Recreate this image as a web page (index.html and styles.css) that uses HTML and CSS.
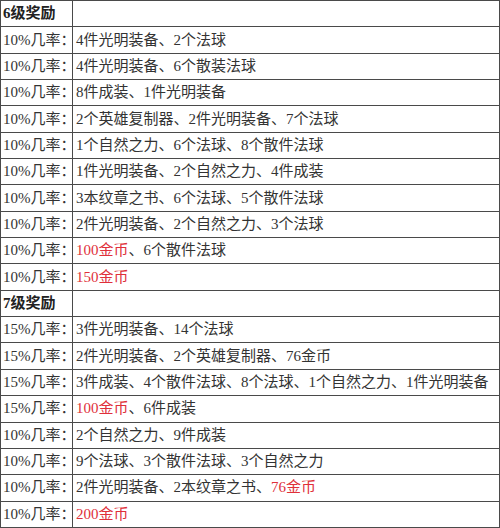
FILE: index.html
```html
<!DOCTYPE html>
<html lang="zh">
<head>
<meta charset="utf-8">
<link rel="stylesheet" href="styles.css">
</head>
<body>
<table class="rewards">
<tr class="head"><td>6级奖励</td><td></td></tr>
<tr><td>10%几率：</td><td>4件光明装备、2个法球</td></tr>
<tr><td>10%几率：</td><td>4件光明装备、6个散装法球</td></tr>
<tr><td>10%几率：</td><td>8件成装、1件光明装备</td></tr>
<tr><td>10%几率：</td><td>2个英雄复制器、2件光明装备、7个法球</td></tr>
<tr><td>10%几率：</td><td>1个自然之力、6个法球、8个散件法球</td></tr>
<tr><td>10%几率：</td><td>1件光明装备、2个自然之力、4件成装</td></tr>
<tr><td>10%几率：</td><td>3本纹章之书、6个法球、5个散件法球</td></tr>
<tr><td>10%几率：</td><td>2件光明装备、2个自然之力、3个法球</td></tr>
<tr><td>10%几率：</td><td><span class="gold">100金币</span>、6个散件法球</td></tr>
<tr><td>10%几率：</td><td><span class="gold">150金币</span></td></tr>
<tr class="head"><td>7级奖励</td><td></td></tr>
<tr><td>15%几率：</td><td>3件光明装备、14个法球</td></tr>
<tr><td>15%几率：</td><td>2件光明装备、2个英雄复制器、76金币</td></tr>
<tr><td>15%几率：</td><td>3件成装、4个散件法球、8个法球、1个自然之力、1件光明装备</td></tr>
<tr><td>15%几率：</td><td><span class="gold">100金币</span>、6件成装</td></tr>
<tr><td>10%几率：</td><td>2个自然之力、9件成装</td></tr>
<tr><td>10%几率：</td><td>9个法球、3个散件法球、3个自然之力</td></tr>
<tr><td>10%几率：</td><td>2件光明装备、2本纹章之书、<span class="gold">76金币</span></td></tr>
<tr><td>10%几率：</td><td><span class="gold">200金币</span></td></tr>
</table>
</body>
</html>
```
FILE: styles.css
```css
html, body {
  margin: 0;
  padding: 0;
  background: #ffffff;
}
.rewards {
  width: 500px;
  height: 528px;
  border-collapse: collapse;
  table-layout: fixed;
  font-family: "Liberation Serif", "Noto Sans CJK SC", serif;
  font-size: 15px;
  line-height: 1;
  color: #333333;
}
.rewards td {
  border: 1px solid #4a4a4a;
  padding: 0 0 0 3px;
  vertical-align: middle;
  white-space: nowrap;
}
.rewards td:first-child {
  width: 69px;
  padding-left: 2px;
}
.pct {
  letter-spacing: -0.5px;
}
.rewards .head td {
  font-weight: bold;
  color: #222222;
}
.gold {
  color: #e0303a;
}
```
